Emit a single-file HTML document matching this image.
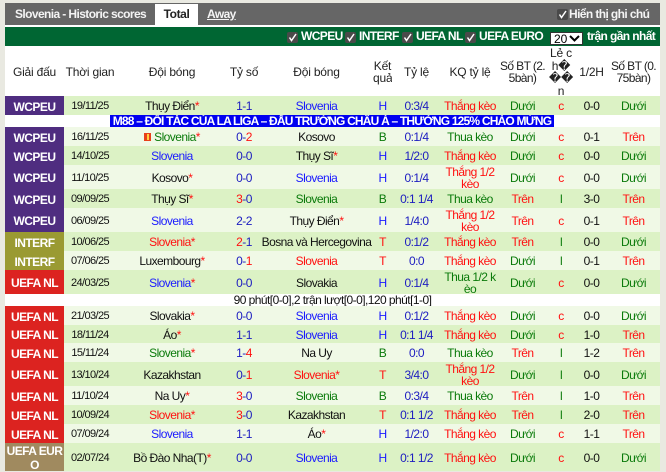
<!DOCTYPE html>
<html>
<head>
<meta charset="utf-8">
<style>
html,body{margin:0;padding:0;width:666px;height:472px;overflow:hidden;background:#e9e9e1;font-family:"Liberation Sans",sans-serif;}
.abs{position:absolute}
#top{left:5px;top:3px;width:655px;height:22px;background:#666;color:#fff}
#top .t{position:absolute;top:0;line-height:22px;font-size:12px;letter-spacing:-.6px;font-weight:bold;white-space:nowrap;color:#f4f4f4}
#tab{left:155px;top:4px;width:43px;height:21px;background:#fff;color:#222;font-size:12px;letter-spacing:-.4px;font-weight:bold;text-align:center;line-height:21px}
#white{left:5px;top:25px;width:655px;height:2px;background:#fff}
#green{left:5px;top:27px;width:655px;height:19px;background:#006633}
.g{position:absolute;top:27px;line-height:19px;font-size:12px;letter-spacing:-.6px;font-weight:bold;color:#fff;white-space:nowrap}
.cb{position:absolute;width:11px;height:11px;background:#4a4a4a;border-radius:2px}
.cb svg{position:absolute;left:0;top:0}
#sel{left:550px;top:32px;width:33px;height:13px;background:#fff;border:1px solid #333;box-sizing:border-box;font-size:12px;color:#000;line-height:12px;padding-left:3px}
table{position:absolute;left:5px;top:46px;width:655px;border-collapse:collapse;table-layout:fixed;font-size:12px;letter-spacing:-.55px;color:#111}
td{padding:2px 0 0;text-align:center;vertical-align:middle;line-height:12.5px;overflow:hidden;white-space:nowrap}
.m{margin:-4px 0}
tr.h td{background:#fff;color:#222;letter-spacing:-.2px}
tr.h td.nar{letter-spacing:-.6px}
tr.a td{background:#dcf2c5}
tr.b td{background:#f0f9e6}
td.l{color:#fff;font-weight:bold;line-height:14px}
tr td.p{background:#4f2d80}
tr td.o{background:#9a9a32}
tr td.r{background:#dc2320}
tr td.n{background:#a08a5f}
.bl{color:#1a1aff}.re{color:#f11}.gr{color:#0a7a0a}.st{color:#f11}
.d{font-size:11px;letter-spacing:-.6px}
.sc{color:#1c1cc0}
tr.w td{background:#fff}
.ad{background:#0000f0;color:#fff;font-weight:bold;font-size:12px;letter-spacing:-.8px;line-height:13px;white-space:nowrap;position:absolute;left:110px;top:115px;width:444px;height:12px;overflow:hidden;text-align:center}
.fl{display:inline-block;width:7px;height:8px;background:#e8401a;margin-right:3px;position:relative}
.fl:after{content:"";position:absolute;left:3px;top:1px;width:1.5px;height:6px;background:#ffd040}
</style>
</head>
<body>
<div class="abs" id="top">
<span class="t" style="left:10px">Slovenia - Historic scores</span>
<span class="t" style="left:202px;text-decoration:underline">Away</span>
<span class="t" style="left:564px">Hiển thị ghi chú</span>
</div>
<div class="abs" id="tab">Total</div>
<div class="cb" style="left:557px;top:9px"><svg width="11" height="11"><path d="M2.5 5.5 L4.5 8.5 L9 2" stroke="#fff" stroke-width="1.5" fill="none"/></svg></div>
<div class="abs" id="white"></div>
<div class="abs" id="green"></div>
<div class="cb" style="left:287px;top:32px"><svg width="11" height="11"><path d="M2.5 5.5 L4.5 8.5 L9 2" stroke="#fff" stroke-width="1.5" fill="none"/></svg></div>
<span class="g" style="left:301px">WCPEU</span>
<div class="cb" style="left:345px;top:32px"><svg width="11" height="11"><path d="M2.5 5.5 L4.5 8.5 L9 2" stroke="#fff" stroke-width="1.5" fill="none"/></svg></div>
<span class="g" style="left:359px">INTERF</span>
<div class="cb" style="left:402px;top:32px"><svg width="11" height="11"><path d="M2.5 5.5 L4.5 8.5 L9 2" stroke="#fff" stroke-width="1.5" fill="none"/></svg></div>
<span class="g" style="left:416px">UEFA NL</span>
<div class="cb" style="left:465px;top:32px"><svg width="11" height="11"><path d="M2.5 5.5 L4.5 8.5 L9 2" stroke="#fff" stroke-width="1.5" fill="none"/></svg></div>
<span class="g" style="left:479px">UEFA EURO</span>
<div class="abs" id="sel">20<svg style="position:absolute;left:18px;top:2px" width="11" height="7"><path d="M1 1 L5.5 5.5 L10 1" stroke="#000" stroke-width="2" fill="none"/></svg></div>
<span class="g" style="left:587px">trận gần nhất</span>
<table>
<colgroup><col style="width:59px"><col style="width:52px"><col style="width:112px"><col style="width:32px"><col style="width:113px"><col style="width:19px"><col style="width:49px"><col style="width:58px"><col style="width:47px"><col style="width:30px"><col style="width:31px"><col style="width:53px"></colgroup>
<tr class="h" style="height:50px"><td>Giải đấu</td><td>Thời gian</td><td>Đội bóng</td><td>Tỷ số</td><td>Đội bóng</td><td><div class="m">Kết<br>quả</div></td><td>Tỷ lệ</td><td>KQ tỷ lệ</td><td class="nar"><div class="m">Số BT (2.<br>5bàn)</div></td><td><div class="m" style="margin:-6px 0 -6px">Lẻ c<br>h�<br>��<br>n</div></td><td>1/2H</td><td class="nar"><div class="m">Số BT (0.<br>75bàn)</div></td></tr>
<tr class="a" style="height:19px"><td class="l p">WCPEU</td><td class="d">19/11/25</td><td>Thụy Điển<span class="st">*</span></td><td class="sc">1-1</td><td class="bl">Slovenia</td><td class="bl">H</td><td class="sc">0:3/4</td><td class="re">Thắng kèo</td><td class="gr">Dưới</td><td class="re">c</td><td>0-0</td><td class="gr">Dưới</td></tr>
<tr class="w" style="height:12px"><td colspan="12" style="padding:0;line-height:1px">&nbsp;</td></tr>
<tr class="b" style="height:19px"><td class="l p">WCPEU</td><td class="d">16/11/25</td><td class="gr"><span class="fl"></span>Slovenia<span class="st">*</span></td><td class="sc">0-<span class="re">2</span></td><td>Kosovo</td><td class="gr">B</td><td class="sc">0:1/4</td><td class="gr">Thua kèo</td><td class="gr">Dưới</td><td class="re">c</td><td>0-1</td><td class="re">Trên</td></tr>
<tr class="a" style="height:19px"><td class="l p">WCPEU</td><td class="d">14/10/25</td><td class="bl">Slovenia</td><td class="sc">0-0</td><td>Thụy Sĩ<span class="st">*</span></td><td class="bl">H</td><td class="sc">1/2:0</td><td class="re">Thắng kèo</td><td class="gr">Dưới</td><td class="re">c</td><td>0-0</td><td class="gr">Dưới</td></tr>
<tr class="b" style="height:24px"><td class="l p">WCPEU</td><td class="d">11/10/25</td><td>Kosovo<span class="st">*</span></td><td class="sc">0-0</td><td class="bl">Slovenia</td><td class="bl">H</td><td class="sc">0:1/4</td><td class="re"><div class="m">Thắng 1/2<br>kèo</div></td><td class="gr">Dưới</td><td class="re">c</td><td>0-0</td><td class="gr">Dưới</td></tr>
<tr class="a" style="height:19px"><td class="l p">WCPEU</td><td class="d">09/09/25</td><td>Thụy Sĩ<span class="st">*</span></td><td class="sc"><span class="re">3</span>-0</td><td class="gr">Slovenia</td><td class="gr">B</td><td class="sc">0:1 1/4</td><td class="gr">Thua kèo</td><td class="re">Trên</td><td class="gr">l</td><td>3-0</td><td class="re">Trên</td></tr>
<tr class="b" style="height:24px"><td class="l p">WCPEU</td><td class="d">06/09/25</td><td class="bl">Slovenia</td><td class="sc">2-2</td><td>Thụy Điển<span class="st">*</span></td><td class="bl">H</td><td class="sc">1/4:0</td><td class="re"><div class="m">Thắng 1/2<br>kèo</div></td><td class="re">Trên</td><td class="re">c</td><td>0-1</td><td class="re">Trên</td></tr>
<tr class="a" style="height:19px"><td class="l o">INTERF</td><td class="d">10/06/25</td><td class="re">Slovenia<span class="st">*</span></td><td class="sc"><span class="re">2</span>-1</td><td>Bosna và Hercegovina</td><td class="re">T</td><td class="sc">0:1/2</td><td class="re">Thắng kèo</td><td class="re">Trên</td><td class="gr">l</td><td>0-0</td><td class="gr">Dưới</td></tr>
<tr class="b" style="height:19px"><td class="l o">INTERF</td><td class="d">07/06/25</td><td>Luxembourg<span class="st">*</span></td><td class="sc">0-<span class="re">1</span></td><td class="re">Slovenia</td><td class="re">T</td><td class="sc">0:0</td><td class="re">Thắng kèo</td><td class="gr">Dưới</td><td class="gr">l</td><td>0-1</td><td class="re">Trên</td></tr>
<tr class="a" style="height:24px"><td class="l r">UEFA NL</td><td class="d">24/03/25</td><td class="bl">Slovenia<span class="st">*</span></td><td class="sc">0-0</td><td>Slovakia</td><td class="bl">H</td><td class="sc">0:1/4</td><td class="gr"><div class="m">Thua 1/2 k<br>èo</div></td><td class="gr">Dưới</td><td class="re">c</td><td>0-0</td><td class="gr">Dưới</td></tr>
<tr class="w" style="height:12px"><td colspan="12" style="padding:0;line-height:12px">90 phút[0-0],2 trận lượt[0-0],120 phút[1-0]</td></tr>
<tr class="b" style="height:19px"><td class="l r">UEFA NL</td><td class="d">21/03/25</td><td>Slovakia<span class="st">*</span></td><td class="sc">0-0</td><td class="bl">Slovenia</td><td class="bl">H</td><td class="sc">0:1/2</td><td class="re">Thắng kèo</td><td class="gr">Dưới</td><td class="re">c</td><td>0-0</td><td class="gr">Dưới</td></tr>
<tr class="a" style="height:18px"><td class="l r">UEFA NL</td><td class="d">18/11/24</td><td>Áo<span class="st">*</span></td><td class="sc">1-1</td><td class="bl">Slovenia</td><td class="bl">H</td><td class="sc">0:1 1/4</td><td class="re">Thắng kèo</td><td class="gr">Dưới</td><td class="re">c</td><td>1-0</td><td class="re">Trên</td></tr>
<tr class="b" style="height:19px"><td class="l r">UEFA NL</td><td class="d">15/11/24</td><td class="gr">Slovenia<span class="st">*</span></td><td class="sc">1-<span class="re">4</span></td><td>Na Uy</td><td class="gr">B</td><td class="sc">0:0</td><td class="gr">Thua kèo</td><td class="re">Trên</td><td class="gr">l</td><td>1-2</td><td class="re">Trên</td></tr>
<tr class="a" style="height:24px"><td class="l r">UEFA NL</td><td class="d">13/10/24</td><td>Kazakhstan</td><td class="sc">0-<span class="re">1</span></td><td class="re">Slovenia<span class="st">*</span></td><td class="re">T</td><td class="sc">3/4:0</td><td class="re"><div class="m">Thắng 1/2<br>kèo</div></td><td class="gr">Dưới</td><td class="gr">l</td><td>0-0</td><td class="gr">Dưới</td></tr>
<tr class="b" style="height:19px"><td class="l r">UEFA NL</td><td class="d">11/10/24</td><td>Na Uy<span class="st">*</span></td><td class="sc"><span class="re">3</span>-0</td><td class="gr">Slovenia</td><td class="gr">B</td><td class="sc">0:3/4</td><td class="gr">Thua kèo</td><td class="re">Trên</td><td class="gr">l</td><td>1-0</td><td class="re">Trên</td></tr>
<tr class="a" style="height:19px"><td class="l r">UEFA NL</td><td class="d">10/09/24</td><td class="re">Slovenia<span class="st">*</span></td><td class="sc"><span class="re">3</span>-0</td><td>Kazakhstan</td><td class="re">T</td><td class="sc">0:1 1/2</td><td class="re">Thắng kèo</td><td class="re">Trên</td><td class="gr">l</td><td>2-0</td><td class="re">Trên</td></tr>
<tr class="b" style="height:19px"><td class="l r">UEFA NL</td><td class="d">07/09/24</td><td class="bl">Slovenia</td><td class="sc">1-1</td><td>Áo<span class="st">*</span></td><td class="bl">H</td><td class="sc">1/2:0</td><td class="re">Thắng kèo</td><td class="gr">Dưới</td><td class="re">c</td><td>1-1</td><td class="re">Trên</td></tr>
<tr class="a" style="height:28px"><td class="l n"><div class="m">UEFA EUR<br>O</div></td><td class="d">02/07/24</td><td>Bồ Đào Nha(T)<span class="st">*</span></td><td class="sc">0-0</td><td class="bl">Slovenia</td><td class="bl">H</td><td class="sc">0:1 1/2</td><td class="re">Thắng kèo</td><td class="gr">Dưới</td><td class="re">c</td><td>0-0</td><td class="gr">Dưới</td></tr>
</table>
<div class="ad">M88 – ĐỐI TÁC CỦA LA LIGA – ĐẤU TRƯỜNG CHÂU Á – THƯỞNG 125% CHÀO MỪNG</div>
</body>
</html>
